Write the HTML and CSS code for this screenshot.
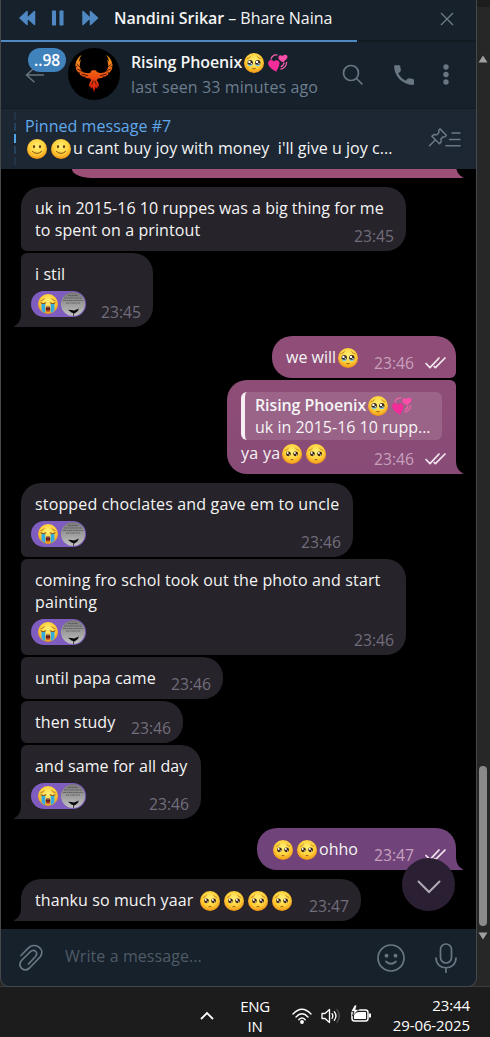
FILE: index.html
```html
<!DOCTYPE html>
<html lang="en">
<head>
<meta charset="utf-8">
<title>Chat</title>
<link rel="stylesheet" href="styles.css">
</head>
<body>
<svg class="defs" aria-hidden="true">
  <defs>
    <radialGradient id="face" cx="50%" cy="38%" r="62%"><stop offset="0" stop-color="#fff07a"/><stop offset=".6" stop-color="#ffd13a"/><stop offset="1" stop-color="#f39314"/></radialGradient>
    <linearGradient id="fire" x1="0" y1="0" x2="0" y2="1"><stop offset="0" stop-color="#f6a01c"/><stop offset=".5" stop-color="#ee5a12"/><stop offset="1" stop-color="#d80f0c"/></linearGradient>
    <linearGradient id="photo" x1="0" y1="0" x2="0" y2="1"><stop offset="0" stop-color="#777"/><stop offset="1" stop-color="#c2c2c2"/></linearGradient>
    <symbol id="smile" viewBox="0 0 20 20"><circle cx="10" cy="10" r="10" fill="url(#face)"/><ellipse cx="7" cy="7.600" rx="1.100" ry="1.700" fill="#6b3d0c"/><ellipse cx="13" cy="7.600" rx="1.100" ry="1.700" fill="#6b3d0c"/><path d="M5.500 12.600q4.500 3.800 9 0" fill="none" stroke="#6b3d0c" stroke-width=".9" stroke-linecap="round"/></symbol>
    <symbol id="plead" viewBox="0 0 20 20"><circle cx="10" cy="10" r="10" fill="url(#face)"/><path d="M3.200 6.500Q5.300 6 6.500 4.300M16.800 6.500Q14.700 6 13.500 4.300" fill="none" stroke="#a8641a" stroke-width=".7" stroke-linecap="round"/><circle cx="6.400" cy="9.800" r="2.400" fill="#38200f"/><circle cx="13.600" cy="9.800" r="2.400" fill="#38200f"/><circle cx="5.700" cy="9" r="1" fill="#fff"/><circle cx="12.900" cy="9" r="1" fill="#fff"/><circle cx="7.300" cy="10.900" r=".6" fill="#fff"/><circle cx="14.500" cy="10.900" r=".6" fill="#fff"/><path d="M8.900 15.700q1.100-.9 2.200 0" fill="none" stroke="#8a4b10" stroke-width=".9" stroke-linecap="round"/></symbol>
    <symbol id="teary" viewBox="0 0 20 20"><circle cx="10" cy="10" r="10" fill="url(#face)"/><path d="M3 5.900Q5.300 5.400 6.500 3.700M17 5.900Q14.700 5.400 13.500 3.700" fill="none" stroke="#a8641a" stroke-width=".7" stroke-linecap="round"/><circle cx="6.200" cy="9.800" r="2.700" fill="#38281f"/><circle cx="13.800" cy="9.800" r="2.700" fill="#38281f"/><path d="M3.500 11q2.600 1.500 5.400 0-.3 2.300-2.700 2.300T3.500 11zM11.100 11q2.600 1.500 5.400 0-.3 2.300-2.700 2.300T11.100 11z" fill="#7fcde0"/><circle cx="5.400" cy="8.900" r="1.200" fill="#fff"/><circle cx="13" cy="8.900" r="1.200" fill="#fff"/><circle cx="7.300" cy="10.600" r=".7" fill="#fff"/><circle cx="14.900" cy="10.600" r=".7" fill="#fff"/><path d="M8.500 15.500q1.500 1.200 3 0" fill="none" stroke="#8a4b10" stroke-width=".9" stroke-linecap="round"/></symbol>
    <symbol id="cry" viewBox="0 0 20 20"><circle cx="10" cy="10" r="10" fill="url(#face)"/><path d="M2.600 6.700Q5 6.300 6.500 4.300M17.400 6.700Q15 6.300 13.500 4.300" fill="none" stroke="#8a4b10" stroke-width=".7"/><path d="M3.500 10h3.800v9q-2.100-.8-3.800-2.600zM12.700 10h3.800v6.400q-1.700 1.800-3.800 2.600z" fill="#35ade4"/><path d="M2.900 9q2.300 1.400 5 0M12.100 9q2.700 1.400 5 0" fill="none" stroke="#5c300d" stroke-width=".9" stroke-linecap="round"/><ellipse cx="10" cy="14.800" rx="2.200" ry="2.900" fill="#6a1c14"/><path d="M8.400 13.300q1.600-1.600 3.200 0z" fill="#fff"/><path d="M8.600 16.700q1.400-1.400 2.800 0-1.400 1.500-2.800 0z" fill="#ec5e50"/></symbol>
    <symbol id="hearts" viewBox="0 0 20 20"><path d="M3 6C4 3 6.500 1.600 9 1.900M18.600 9.500C18.300 13 16 15.500 12.900 16.200M16 10q-.5 2.500-2.800 3.600" fill="none" stroke="#f561ae" stroke-width="1.300" stroke-linecap="round"/><path d="M8.200 18.800C3.500 16 0 13.200.1 10 .2 7 3.900 6 5.700 8.600 8 5.900 12.100 7.200 11.500 10.800 11.100 14 9.100 16.600 8.200 18.800z" fill="#f22c98"/><path d="M15.300 9.300c-2.600-1-5-2.600-4.900-5 .1-2.200 2.700-2.900 3.900-1 1.200-2.100 5.300-2.200 5.200.8-.1 2.200-3 3.600-4.200 5.200z" fill="#ff4eaa"/></symbol>
    <symbol id="ticks" viewBox="0 0 22 12"><path d="M1 6.500l4 4.200L14 1M9.200 9.500l1.200 1.200L20 1" fill="none" stroke="currentColor" stroke-width="1.700" stroke-linecap="round" stroke-linejoin="round"/></symbol>
    <symbol id="bird" viewBox="0 0 24 24"><circle cx="12" cy="12" r="12" fill="url(#photo)"/><path d="M7 3.500h10M3 6h18M2 8.500h20M5 11h14" stroke="#505050" stroke-width=".7" stroke-dasharray="3 .6 2 .5"/><path d="M7 17.800q3.500.2 6 .7l5-2-1.500 2.700-3 2.200-3-.8z" fill="#090909"/><path d="M12.500 21v3" stroke="#222" stroke-width=".8"/></symbol>
    <symbol id="tail" viewBox="0 0 8 12"><path d="M8 0v12H.4Q-.4 11.800.3 11.200Q6.500 8 7 0z" fill="currentColor"/></symbol>
  </defs>
</svg>
<div class="screen">
  <div class="top">
    <main class="window">
      <section class="player">
        <svg class="controls" viewBox="0 0 80 16" fill="#4f88c2" stroke="#4f88c2" stroke-width="1.500" stroke-linejoin="round"><path d="M8 1.500v13L1 8zM15.500 1.500v13L8.500 8z"/><path d="M33.700 1.200h2.600v13.600h-2.600zM41.200 1.200h2.600v13.600h-2.600z"/><path d="M64 1.500v13L71 8zM71.500 1.500v13L78.500 8z"/></svg>
        <div class="track"><b>Nandini Srikar</b> – Bhare Naina</div>
        <svg class="close" viewBox="0 0 14 14"><path d="M1 1l12 12M13 1L1 13" stroke="#6d7c88" stroke-width="1.300"/></svg>
      </section>
      <div class="progress"><div class="played"></div></div>
      <header class="header">
        <div class="back">
          <svg viewBox="0 0 20 16"><path d="M19 8H1.500M9.500.8L1.500 8l8 7.200" fill="none" stroke="#67747f" stroke-width="1.500"/></svg>
          <span class="badge">..98</span>
        </div>
        <svg class="avatar" viewBox="12 12 156 156"><circle cx="90" cy="90" r="78"/><path fill="url(#fire)" d="M53 33C43 38 35 51 34 66l7 3-6 1c1 7 4 12 9 16l6-1-4 4c4 5 9 8 14 9l5-2-3 4c5 3 9 3 14 3l6 5-5 8-3 12 5-3 1 10 5-6 5 16 5-16 5 6 1-10 5 3-3-12-5-8 6-5c5 0 9 0 14-3l-3-4 5 2c5-1 10-4 14-9l-4-4 6 1c5-4 8-9 9-16l-6-1 7-3C145 51 137 38 126 33c6 6 8 13 9 20l-6-7c4 12 5 22 1 30-4 7-10 10-17 11-7 0-11-2-15-4-1-4-5-5-8-4-5-1-8 1-10 5l3 1c-5 2-10 3-16 2-7-1-13-4-17-11-4-8-3-18 1-30l-6 7c1-7 3-14 8-20z"/><path d="M38 60l15 14M40 75l22 11M52 90l20 5M142 60l-15 14M140 75l-22 11M128 90l-20 5M83 122l5-12M97 122l-5-12" stroke="#170300" stroke-width="2.200" fill="none"/></svg>
        <div class="peer">
          <div class="name">Rising Phoenix<svg class="em"><use href="#teary"/></svg><svg class="em"><use href="#hearts"/></svg></div>
          <div class="seen">last seen 33 minutes ago</div>
        </div>
        <div class="actions">
          <svg class="search" viewBox="0 0 22 22"><circle cx="9" cy="9" r="7.500"/><path d="M14.500 14.500l6 6"/></svg>
          <svg class="phone" viewBox="0 0 22 22"><path d="M2.200 1.200H6q1 0 1.200 1l.7 4q.1.800-.5 1.400L5.200 9.500Q7.800 14.300 12.600 16.800l2-2.100q.6-.6 1.400-.5l4 .8q1 .2 1 1.200v3.600q0 1.200-1.200 1.100C9.300 20.300 1.700 12.700 1.100 2.400q0-1.200 1.100-1.200z"/></svg>
          <svg class="more" viewBox="0 0 6 22"><circle cx="3" cy="3" r="2.700"/><circle cx="3" cy="10.500" r="2.700"/><circle cx="3" cy="18" r="2.700"/></svg>
        </div>
      </header>
      <section class="pinned">
        <div class="marks"><i></i><i></i><i class="on"></i><i></i><i></i></div>
        <div class="pin-body">
          <div class="pin-title">Pinned message #7</div>
          <div class="pin-text"><svg class="em"><use href="#smile"/></svg><svg class="em"><use href="#smile"/></svg>u cant buy joy with money&nbsp; i'll give u joy c...</div>
        </div>
        <svg class="pin-icon" viewBox="0 0 34 20" fill="none" stroke="#6a7885" stroke-width="1.500" stroke-linecap="round" stroke-linejoin="round"><path d="M12 .9l6.300 6.300-1 1.500-2.300.2-2 2 .1 3-1.700 1.900-7.500-7.500L5.800 6.600l3 .1 2.200-2.200-.3-2.200zM7 12.300L1.500 17.800M24 5h8M21.500 11.500H32M18 17.800H32"/></svg>
      </section>
      <section class="chat">
        <div class="group sent"><div class="bubble cut"><svg class="tail"><use href="#tail"/></svg></div></div>
        <div class="group">
          <div class="bubble first w385"><div class="text"><span class="snug">uk in 2015-16 10 ruppes was a big thing for me</span><br>to spent on a printout</div><div class="meta">23:45</div></div>
          <div class="bubble last w132"><div class="text">i stil<div class="reaction"><svg class="em"><use href="#cry"/></svg><svg class="who"><use href="#bird"/></svg></div></div><div class="meta">23:45</div><svg class="tail"><use href="#tail"/></svg></div>
        </div>
        <div class="group sent">
          <div class="bubble first w184"><div class="text">we will<svg class="em"><use href="#teary"/></svg></div><div class="meta">23:46<svg class="tick"><use href="#ticks"/></svg></div></div>
          <div class="bubble last lower w229"><div class="text"><div class="quote"><div class="q-name">Rising Phoenix<svg class="em"><use href="#teary"/></svg><svg class="em"><use href="#hearts"/></svg></div><div>uk in 2015-16 10 rupp...</div></div><span class="loose">ya ya</span><svg class="em"><use href="#plead"/></svg><svg class="em"><use href="#plead"/></svg></div><div class="meta">23:46<svg class="tick"><use href="#ticks"/></svg></div><svg class="tail"><use href="#tail"/></svg></div>
        </div>
        <div class="group">
          <div class="bubble first w332"><div class="text wide">stopped choclates and gave em to uncle<div class="reaction"><svg class="em"><use href="#cry"/></svg><svg class="who"><use href="#bird"/></svg></div></div><div class="meta">23:46</div></div>
          <div class="bubble w385"><div class="text wide">coming fro schol took out the photo and start<br>painting<div class="reaction"><svg class="em"><use href="#cry"/></svg><svg class="who"><use href="#bird"/></svg></div></div><div class="meta">23:46</div></div>
          <div class="bubble w202"><div class="text">until papa came</div><div class="meta">23:46</div></div>
          <div class="bubble w162"><div class="text">then study</div><div class="meta">23:46</div></div>
          <div class="bubble last w180"><div class="text">and same for all day<div class="reaction"><svg class="em"><use href="#cry"/></svg><svg class="who"><use href="#bird"/></svg></div></div><div class="meta">23:46</div><svg class="tail"><use href="#tail"/></svg></div>
        </div>
        <div class="group sent">
          <div class="bubble first last bottom w199"><div class="text"><svg class="em"><use href="#plead"/></svg><svg class="em"><use href="#plead"/></svg>ohho</div><div class="meta">23:47<svg class="tick"><use href="#ticks"/></svg></div><svg class="tail"><use href="#tail"/></svg></div>
        </div>
        <div class="group">
          <div class="bubble first last w340"><div class="text">thanku so much yaar <svg class="em"><use href="#plead"/></svg><svg class="em"><use href="#plead"/></svg><svg class="em"><use href="#plead"/></svg><svg class="em"><use href="#plead"/></svg></div><div class="meta">23:47</div><svg class="tail"><use href="#tail"/></svg></div>
        </div>
        <div class="jump"><svg viewBox="0 0 24 14"><path d="M1.500 1.500L12 12 22.500 1.500" fill="none" stroke="#b1abb8" stroke-width="2" stroke-linecap="round"/></svg></div>
      </section>
      <footer class="compose">
        <svg class="clip" viewBox="0 0 24 28"><path d="M2 11.500l7.500-7.700C15-1.600 26.500 3.500 21.500 12.500L10.500 24C5 29-2 22.500 2.500 16.500L11 8c4.500-4 8.500.5 5.500 4.500L9.500 20"/></svg>
        <div class="placeholder">Write a message...</div>
        <svg class="smiley" viewBox="0 0 28 28"><circle cx="14" cy="14" r="13"/><path d="M9 17.500q5 4.500 10 0"/><circle class="dot" cx="9.500" cy="11.700" r="1.900"/><circle class="dot" cx="18.500" cy="11.700" r="1.900"/></svg>
        <svg class="mic" viewBox="0 0 22 30"><rect x="5.500" y="1" width="11" height="19" rx="5.500"/><path d="M1 15C1 28 21 28 21 15M11 25v4.500"/></svg>
      </footer>
    </main>
    <aside class="rail">
      <svg class="arrow" viewBox="0 0 10 8"><path d="M5 .5L9.500 7.500H.5z"/></svg>
      <div class="thumb"></div>
      <svg class="arrow down" viewBox="0 0 10 8"><path d="M5 7.500L.5.500h9z"/></svg>
    </aside>
  </div>
  <div class="taskbar">
    <svg class="chev" viewBox="0 0 14 9"><path d="M1 8l6-6 6 6" fill="none" stroke="#fff" stroke-width="1.800"/></svg>
    <div class="lang">ENG<br>IN</div>
    <svg class="wifi" viewBox="0 0 20 16" fill="none" stroke="#fff" stroke-width="1.400" stroke-linecap="round"><path d="M1 6q9-9.500 18 0M4 9q6-6.500 12 0M6.800 11.700q3.200-3.300 6.400 0"/><circle cx="10" cy="14" r="1.200" fill="#fff"/></svg>
    <svg class="sound" viewBox="0 0 20 16" fill="none" stroke="#fff" stroke-width="1.300" stroke-linecap="round" stroke-linejoin="round"><path d="M1 5.500h3l4.500-4v13l-4.500-4H1zM11 5.700q1.700 2.300 0 4.600M13.300 3.700q3.300 4.300 0 8.600"/><path d="M16 1.500q4.500 6.500 0 13" stroke="#555"/></svg>
    <svg class="battery" viewBox="0 0 20 18"><rect x="1" y="5" width="16" height="11" rx="2.500" fill="none" stroke="#fff" stroke-width="1.500"/><path d="M3 8l5-1h7v7H3zM18 8.500h2v4h-2z" fill="#fff"/><path d="M3.500 0L0 6.500h3L1.500 11 8 4.500H4.700L6 0z" fill="#fff" stroke="#1c1c1c" stroke-width=".8"/></svg>
    <div class="clock">23:44<br>29-06-2025</div>
  </div>
</div>
</body>
</html>
```
FILE: styles.css
```css
* { box-sizing: border-box; }
body { margin: 0; background: #1c1c1c; font: 16px/22px "Open Sans", "Noto Sans", sans-serif; color: #f5f5f5; }
svg { flex: none; }
.defs { position: absolute; width: 0; height: 0; }
.screen { width: 490px; height: 1037px; overflow: hidden; display: flex; flex-direction: column; }
.top { height: 987px; display: flex; background: #272727; border-bottom: 1px solid #3e3e3e; }
.window { width: 477px; height: 987px; display: flex; flex-direction: column; border: solid #46494b; border-width: 0 1px 1px; border-radius: 0 0 9px 9px; overflow: hidden; background: #17212b; }
b, .name, .q-name { font-weight: 600; }
.em { width: 20px; height: 20px; margin: 0 2px; vertical-align: -5px; display: inline-block; }

.player { height: 40px; flex: none; display: flex; align-items: center; padding: 0 22px 4px 18px; }
.controls { width: 80px; height: 16px; }
.track { flex: 1; padding-left: 15px; white-space: nowrap; letter-spacing: -.04px; }
.close { width: 14px; height: 14px; margin-top: 1px; }
.progress { height: 2px; flex: none; background: #121a22; }
.played { width: 356px; height: 2px; background: #4f88c2; }

.header { height: 67px; flex: none; display: flex; align-items: center; border-bottom: 1px solid #111921; padding: 0 27px 2px 24px; }
.back { width: 43px; position: relative; display: flex; padding-top: 1px; }
.back svg { width: 20px; height: 16px; }
.badge { position: absolute; left: 3px; top: -18px; width: 38px; height: 24px; border-radius: 12px; background: #4082bc; color: #fff; text-align: center; font-weight: 600; font-size: 15.500px; line-height: 24px; }
.avatar { width: 52px; height: 52px; }
.peer { flex: 1; padding: 2px 0 0 11px; white-space: nowrap; line-height: 25px; }
.name { letter-spacing: -.1px; }
.seen { color: #6c7d8e; letter-spacing: .1px; }
.actions { display: flex; align-items: center; padding-top: 2px; }
.search { width: 22px; height: 22px; fill: none; stroke: #697783; stroke-width: 1.700; margin-right: 29px; }
.phone { width: 22px; height: 22px; fill: #697783; margin-right: 28px; }
.more { width: 6px; height: 22px; fill: #697783; }

.pinned { height: 60px; flex: none; background: #1c2733; display: flex; padding: 6px 14px 0 12px; }
.marks { width: 2px; height: 53px; margin: -3px 9px 0 1px; display: flex; flex-direction: column; gap: 3px; flex: none; }
.marks i { height: 9px; background: #25435c; }
.marks i:first-child, .marks i:last-child { opacity: .5; }
.marks .on { background: #4ea4e4; }
.pin-body { flex: 1; white-space: nowrap; letter-spacing: .05px; }
.pin-title { color: #61a8ec; font-weight: 500; }
.pin-icon { width: 34px; height: 20px; margin-top: 13px; }

.chat { height: 760px; flex: none; background: #000; position: relative; display: flex; flex-direction: column; gap: 9px; padding: 0 20px; overflow: hidden; }
.group { display: flex; flex-direction: column; align-items: flex-start; gap: 2px; }
.sent { align-items: flex-end; }
.bubble { display: grid; position: relative; background: #26232a; color: #26232a; border-radius: 6px 20px 20px 6px; }
.bubble.first { border-top-left-radius: 20px; }
.bubble.last { border-bottom-left-radius: 0; }
.text, .meta { grid-area: 1 / 1; }
.text { color: #f5f5f5; padding: 10px 0 10px 14px; white-space: nowrap; letter-spacing: .09px; }
.wide { letter-spacing: .15px; }
.snug { letter-spacing: .01px; }
.loose { letter-spacing: .3px; }
.meta { place-self: end; padding: 0 12px 4px 0; color: #716d7b; font-size: 15.700px; display: flex; align-items: center; }
.tail { position: absolute; left: -7px; bottom: 0; width: 8px; height: 12px; }
.sent .bubble { background: #8f4d77; color: #8b4c77; border-radius: 20px 6px 6px 20px; }
.sent .first { border-top-right-radius: 20px; }
.sent .last { border-bottom-right-radius: 0; }
.sent .lower { background: linear-gradient(#8e4d77, #884b77); color: #884b77; }
.sent .bottom { background: #70447a; color: #70447a; border-bottom-left-radius: 20px; }
.sent .tail { left: auto; right: -7px; transform: scaleX(-1); }
.sent .last { border-bottom-left-radius: 20px; }
.sent .text { letter-spacing: 0; }
.sent .meta { color: #c7a1bc; padding-right: 9px; }
.sent .cut { width: 384px; height: 9px; background: #9c5078; color: #9c5078; border-radius: 0 0 0 20px / 0 0 0 9px; }
.tick { width: 22px; height: 12px; margin-left: 11px; color: #f3e8f0; }
.w385 { width: 385px; } .w132 { width: 132px; } .w184 { width: 184px; } .w229 { width: 229px; }
.w332 { width: 332px; } .w202 { width: 202px; } .w162 { width: 162px; } .w180 { width: 180px; }
.w199 { width: 199px; } .w340 { width: 340px; }
.reaction { width: 55px; height: 26px; margin: 6px 0 0 -4px; border-radius: 13px; background: #7f5cc0; display: flex; align-items: center; padding: 0 1px 0 5px; gap: 1px; }
.who { width: 24px; height: 24px; }
.quote { width: 201px; height: 48px; margin: 2px 0; padding: 2px 0 0 10px; border-left: 4px solid #f7edf3; border-radius: 6px; background: rgba(255,255,255,.13); }
.q-name { letter-spacing: -.1px; }
.jump { position: absolute; left: 401px; top: 689px; width: 53px; height: 53px; border-radius: 50%; background: #2b2033; display: flex; align-items: center; justify-content: center; }
.jump svg { width: 24px; height: 14px; margin-top: 4px; }

.compose { flex: 1; display: flex; align-items: center; padding: 0 19px 0 18px; }
.compose svg { fill: none; stroke: #697783; stroke-width: 1.700; stroke-linecap: round; }
.compose .dot { fill: #697783; stroke: none; }
.clip { width: 24px; height: 28px; }
.placeholder { flex: 1; padding: 0 0 4px 22px; color: #4e5a66; letter-spacing: .08px; }
.smiley { width: 28px; height: 28px; margin-right: 30px; }
.mic { width: 22px; height: 30px; }

.rail { width: 13px; display: flex; flex-direction: column; align-items: center; padding: 48px 2px 0 0; border-top: 7px solid #1d1d1d; }
.arrow { width: 10px; height: 8px; fill: #a0a0a0; }
.thumb { width: 8px; height: 160px; border-radius: 4px; background: #8a8a8a; margin: 703px 0 6px; }

.taskbar { height: 50px; display: flex; align-items: center; padding: 0 20px 0 200px; font-size: 15px; line-height: 20px; color: #fff; }
.chev { width: 14px; height: 9px; margin-top: 6px; }
.lang { width: 42px; margin: 7px 16px 0 20px; text-align: center; letter-spacing: -.3px; }
.wifi { width: 20px; height: 16px; margin: 7px 9px 0 0; }
.sound { width: 20px; height: 16px; margin: 7px 10px 0 0; }
.battery { width: 20px; height: 18px; margin-top: 4px; }
.clock { flex: 1; text-align: right; white-space: nowrap; padding-top: 5px; letter-spacing: -.1px; }
```
